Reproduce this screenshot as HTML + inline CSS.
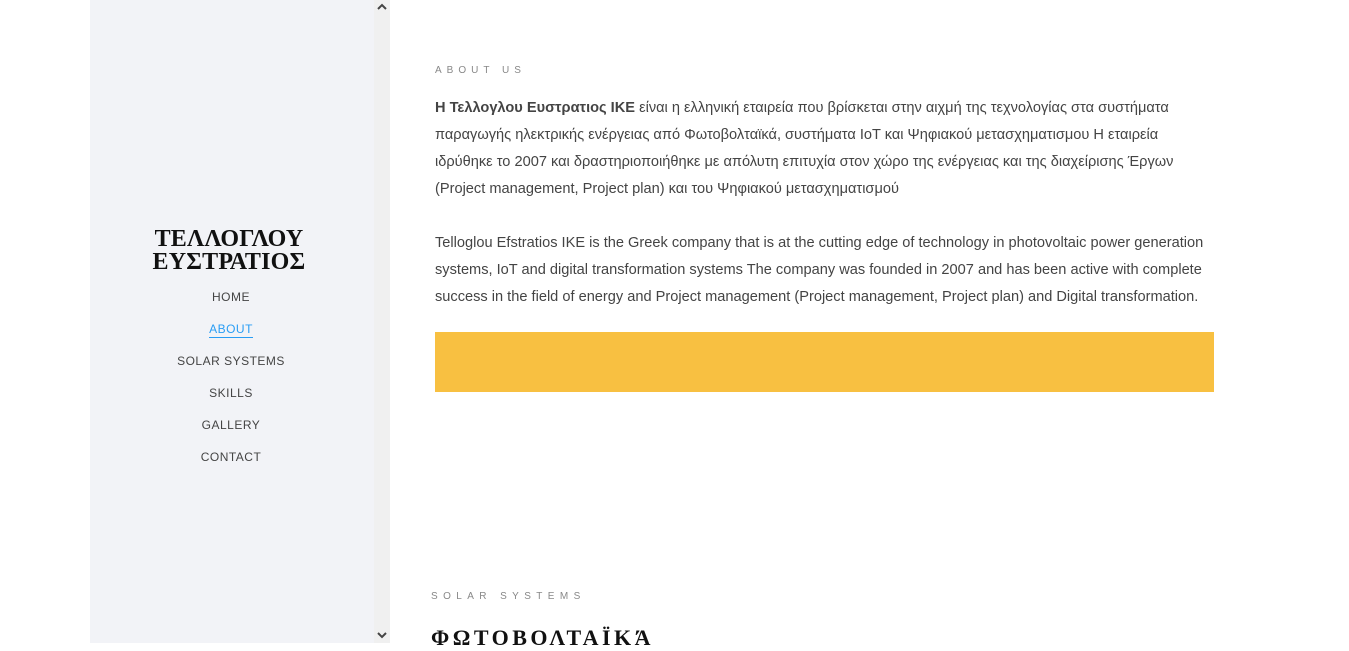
<!DOCTYPE html>
<html><head><meta charset="utf-8"><style>
*{margin:0;padding:0;box-sizing:border-box}
body{width:1349px;height:643px;overflow:hidden;background:#fff;position:relative;font-family:"Liberation Sans",sans-serif}
#side{position:absolute;left:90px;top:0;width:284px;height:643px;background:#f2f3f7}
#sb{position:absolute;left:374px;top:0;width:16px;height:643px;background:#f0f0f0}
.logo{position:absolute;top:228px;left:0;width:278px;text-align:center;font-family:"Liberation Serif",serif;font-weight:bold;font-size:24px;line-height:23px;letter-spacing:0.2px;color:#111}
.nav{position:absolute;left:0;width:282px;text-align:center;font-size:12px;letter-spacing:0.5px;color:#444}
.lbl{position:absolute;font-size:10px;letter-spacing:5px;color:#888}
p.t{position:absolute;left:435px;width:774px;font-size:14.6px;line-height:27px;color:#444}
</style></head><body>
<div id="side">
<div class="logo">ΤΕΛΛΟΓΛΟΥ<br>ΕΥΣΤΡΑΤΙΟΣ</div>
<div class="nav" style="top:290px">HOME</div>
<div class="nav" style="top:322px;color:#2a9df4"><span style="border-bottom:1px solid #2a9df4;padding-bottom:1px">ABOUT</span></div>
<div class="nav" style="top:354px">SOLAR SYSTEMS</div>
<div class="nav" style="top:386px">SKILLS</div>
<div class="nav" style="top:418px">GALLERY</div>
<div class="nav" style="top:450px">CONTACT</div>
</div>
<div id="sb">
<svg style="position:absolute;top:3px;left:3px" width="10" height="8"><path d="M1 6 L5 2 L9 6" stroke="#444" stroke-width="2" fill="none"/></svg>
<svg style="position:absolute;top:631px;left:3px" width="10" height="8"><path d="M1 2 L5 6 L9 2" stroke="#444" stroke-width="2" fill="none"/></svg>
</div>
<div class="lbl" style="left:435px;top:65px">ABOUT US</div>
<p class="t" style="top:95px"><b>Η Τελλογλου Ευστρατιος ΙΚΕ</b> είναι η ελληνική εταιρεία που βρίσκεται στην αιχμή της τεχνολογίας στα συστήματα παραγωγής ηλεκτρικής ενέργειας από Φωτοβολταϊκά, συστήματα IoT και Ψηφιακού μετασχηματισμου Η εταιρεία ιδρύθηκε το 2007 και δραστηριοποιήθηκε με απόλυτη επιτυχία στον χώρο της ενέργειας και της διαχείρισης Έργων (Project management, Project plan) και του Ψηφιακού μετασχηματισμού</p>
<p class="t" style="top:230px">Telloglou Efstratios IKE is the Greek company that is at the cutting edge of technology in photovoltaic power generation systems, IoT and digital transformation systems The company was founded in 2007 and has been active with complete success in the field of energy and Project management (Project management, Project plan) and Digital transformation.</p>
<div style="position:absolute;left:435px;top:332px;width:779px;height:60px;background:#f8c041"></div>
<div class="lbl" style="left:431px;top:591px;letter-spacing:5.4px">SOLAR SYSTEMS</div>
<div style="position:absolute;left:431px;top:625px;font-family:'Liberation Serif',serif;font-weight:bold;font-size:22px;letter-spacing:3.5px;color:#111">ΦΩΤΟΒΟΛΤΑΪΚΆ</div>
</body></html>
